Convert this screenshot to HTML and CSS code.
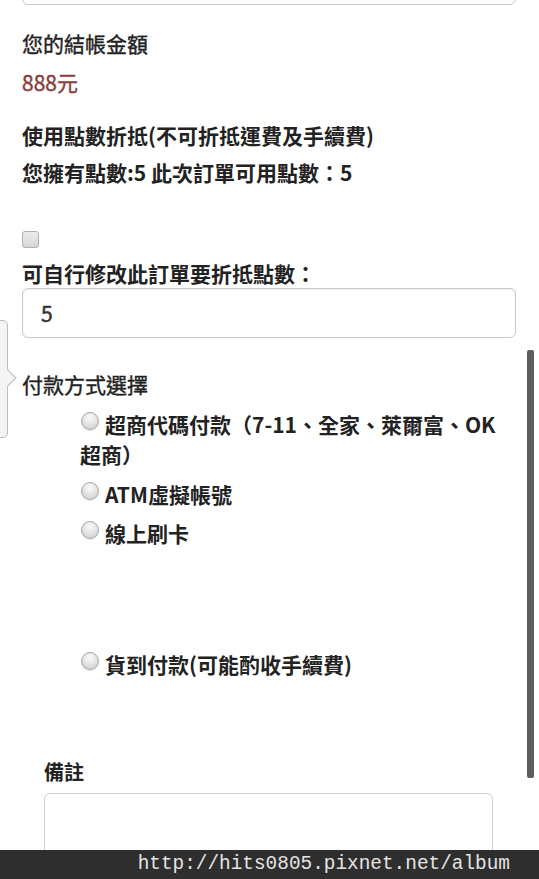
FILE: index.html
```html
<!DOCTYPE html>
<html lang="zh-Hant">
<head>
  <meta charset="UTF-8">
  <meta name="viewport" content="width=device-width, initial-scale=1.0">
  <title>結帳</title>
  <link rel="stylesheet" href="styles.css">
</head>
<body>
  <div class="page">
    <div class="form">
      <input type="text" class="field field-top">

      <p class="label label-light total-label">您的結帳金額</p>
      <p class="amount">888元</p>

      <!-- 點數折抵 -->
      <p class="label points-title">使用點數折抵(不可折抵運費及手續費)</p>
      <p class="label points-own">您擁有點數:5 此次訂單可用點數：5</p>
      <input type="checkbox" class="check">
      <label class="label points-edit" for="points">可自行修改此訂單要折抵點數：</label>
      <input type="text" class="field" id="points" value="5">

      <!-- 付款方式 -->
      <p class="label label-light section">付款方式選擇</p>
      <ul class="pay-list">
        <li class="pay-item"><label><input type="radio" name="pay" class="radio">超商代碼付款（7-11、全家、萊爾富、OK超商）</label></li>
        <li class="pay-item pay-atm"><label><input type="radio" name="pay" class="radio">ATM虛擬帳號</label></li>
        <li class="pay-item pay-card"><label><input type="radio" name="pay" class="radio">線上刷卡</label></li>
        <li class="pay-item pay-cod"><label><input type="radio" name="pay" class="radio">貨到付款(可能酌收手續費)</label></li>
      </ul>

      <div class="note">
        <p class="note-label">備註</p>
        <textarea class="note-box"></textarea>
      </div>
    </div>

    <div class="popover"></div>
    <div class="scrollbar"></div>
    <div class="watermark">http://hits0805.pixnet.net/album</div>
  </div>
</body>
</html>
```

FILE: styles.css
```css
html, body {
  margin: 0;
  background-color: #fff;
}
body {
  font-family: "Noto Sans CJK TC", "Noto Sans", sans-serif;
  color: #222;
}
.page {
  position: relative;
  height: 100vh;
  overflow: hidden;
}
.form {
  padding: 0 23px 0 22px;
}
p {
  margin: 0;
}
.label {
  display: block;
  font-size: 21px;
  line-height: 30px;
  font-weight: 700;
}
/* medium weight, a touch heavier than regular */
.label-light {
  font-weight: 400;
  -webkit-text-stroke: 0.4px currentColor;
}
.field {
  display: block;
  box-sizing: border-box;
  width: 100%;
  height: 50px;
  margin: 0;
  padding: 0 18px;
  border: 1px solid #c8c8c8;
  border-radius: 6px;
  box-shadow: inset 0 1px 2px rgba(0,0,0,0.06);
  font-family: inherit;
  font-size: 21px;
  font-weight: 400;
  -webkit-text-stroke: 0.5px currentColor;
  color: #333;
  background-color: #fff;
}
.field-top {
  height: 45px;
  margin-top: -40px;
}
.total-label {
  margin-top: 23px;
}
.amount {
  margin-top: 9px;
  font-size: 21px;
  line-height: 30px;
  font-weight: 400;
  -webkit-text-stroke: 0.4px currentColor;
  color: #8c3b3c;
}
.points-title {
  margin-top: 23px;
}
.points-own {
  margin-top: 7px;
}
.check {
  display: block;
  appearance: none;
  -webkit-appearance: none;
  width: 17px;
  height: 17px;
  margin: 44px 0 0;
  border: 1px solid #b0b0b0;
  border-radius: 3px;
  background: linear-gradient(#ececec, #d6d6d6);
}
.points-edit {
  margin-top: 10px;
}
.section {
  margin-top: 31px;
}
.pay-list {
  list-style: none;
  margin: 10px 0 0;
  padding: 0 16px 0 58px;
}
.pay-item {
  font-size: 21px;
  line-height: 30px;
  font-weight: 700;
}
.pay-atm {
  margin-top: 10px;
}
.pay-card {
  margin-top: 9px;
}
.pay-cod {
  margin-top: 101px;
}
.radio {
  appearance: none;
  -webkit-appearance: none;
  display: inline-block;
  box-sizing: border-box;
  width: 18px;
  height: 18px;
  margin: 0 6px 0 1px;
  vertical-align: 3px;
  border: 1px solid #a8a8a8;
  border-radius: 50%;
  background: radial-gradient(circle at 50% 30%, #fbfbfb, #d6d6d6 75%);
  box-shadow: 0 1px 1px rgba(0,0,0,0.1);
}
.note {
  margin-top: 78px;
  padding: 0 23px 0 22px;
}
.note-label {
  font-size: 20px;
  line-height: 30px;
  font-weight: 700;
}
.note-box {
  display: block;
  box-sizing: border-box;
  width: 100%;
  height: 120px;
  margin-top: 6px;
  border: 1px solid #cfcfcf;
  border-radius: 6px;
  resize: none;
}
/* popover edge peeking in from the left */
.popover {
  position: absolute;
  top: 320px;
  left: -100px;
  width: 106px;
  height: 116px;
  border: 1px solid #bdbdbd;
  border-radius: 5px;
  background-color: #f4f4f4;
}
.popover::after {
  content: "";
  position: absolute;
  top: 51px;
  right: -7px;
  width: 11px;
  height: 11px;
  border-top: 1px solid #bdbdbd;
  border-right: 1px solid #bdbdbd;
  background-color: #f4f4f4;
  transform: rotate(45deg);
}
.scrollbar {
  position: absolute;
  top: 350px;
  left: 527px;
  width: 7px;
  height: 428px;
  border-radius: 2px;
  background-color: #5c5c5c;
}
.watermark {
  position: absolute;
  left: 0;
  right: 0;
  bottom: 0;
  height: 29px;
  padding-right: 29px;
  background-color: rgba(37,37,37,0.96);
  color: #e4e4e4;
  font-family: "Liberation Mono", monospace;
  font-size: 19.4px;
  line-height: 29px;
  text-align: right;
}
```
